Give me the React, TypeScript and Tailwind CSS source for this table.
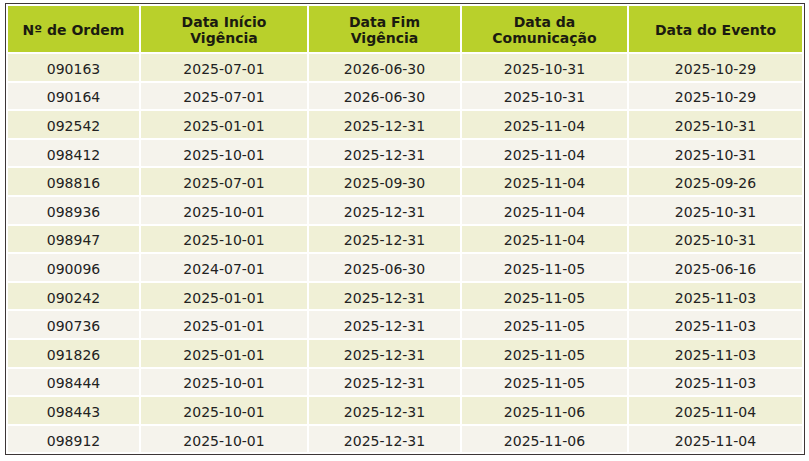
const headers = ['Nº de Ordem', 'Data Início Vigência', 'Data Fim Vigência', 'Data da Comunicação', 'Data do Evento']

const widths = ['w-[131px]', 'w-[166px]', 'w-[151px]', 'w-[165px]', 'w-[173px]']

const rows = [
  ['090163', '2025-07-01', '2026-06-30', '2025-10-31', '2025-10-29'],
  ['090164', '2025-07-01', '2026-06-30', '2025-10-31', '2025-10-29'],
  ['092542', '2025-01-01', '2025-12-31', '2025-11-04', '2025-10-31'],
  ['098412', '2025-10-01', '2025-12-31', '2025-11-04', '2025-10-31'],
  ['098816', '2025-07-01', '2025-09-30', '2025-11-04', '2025-09-26'],
  ['098936', '2025-10-01', '2025-12-31', '2025-11-04', '2025-10-31'],
  ['098947', '2025-10-01', '2025-12-31', '2025-11-04', '2025-10-31'],
  ['090096', '2024-07-01', '2025-06-30', '2025-11-05', '2025-06-16'],
  ['090242', '2025-01-01', '2025-12-31', '2025-11-05', '2025-11-03'],
  ['090736', '2025-01-01', '2025-12-31', '2025-11-05', '2025-11-03'],
  ['091826', '2025-01-01', '2025-12-31', '2025-11-05', '2025-11-03'],
  ['098444', '2025-10-01', '2025-12-31', '2025-11-05', '2025-11-03'],
  ['098443', '2025-10-01', '2025-12-31', '2025-11-06', '2025-11-04'],
  ['098912', '2025-10-01', '2025-12-31', '2025-11-06', '2025-11-04'],
]

export default function App() {
  return (
    <div className="min-h-screen bg-white pt-[3px] pl-[5px] font-['DejaVu_Sans',Verdana,sans-serif]">
      <table className="border border-[#3d3636] border-separate border-spacing-[2px] table-fixed text-[14px] leading-[16px]">
        <thead>
          <tr className="h-[46px]">
            {headers.map((h, i) => (
              <th
                key={h}
                className={`${widths[i]} bg-[#b9d02b] text-[#1b1b10] font-bold text-center align-middle px-2 pt-[2px]`}
              >
                {h}
              </th>
            ))}
          </tr>
        </thead>
        <tbody>
          {rows.map((r, ri) => (
            <tr key={r[0]} className="h-[26.6px]">
              {r.map((c, ci) => (
                <td
                  key={ci}
                  className={`${ri % 2 === 0 ? 'bg-[#f0f0d6]' : 'bg-[#f5f3ec]'} text-[#222] text-center align-middle px-0 pt-[3px] pb-0`}
                >
                  {c}
                </td>
              ))}
            </tr>
          ))}
        </tbody>
      </table>
    </div>
  )
}
